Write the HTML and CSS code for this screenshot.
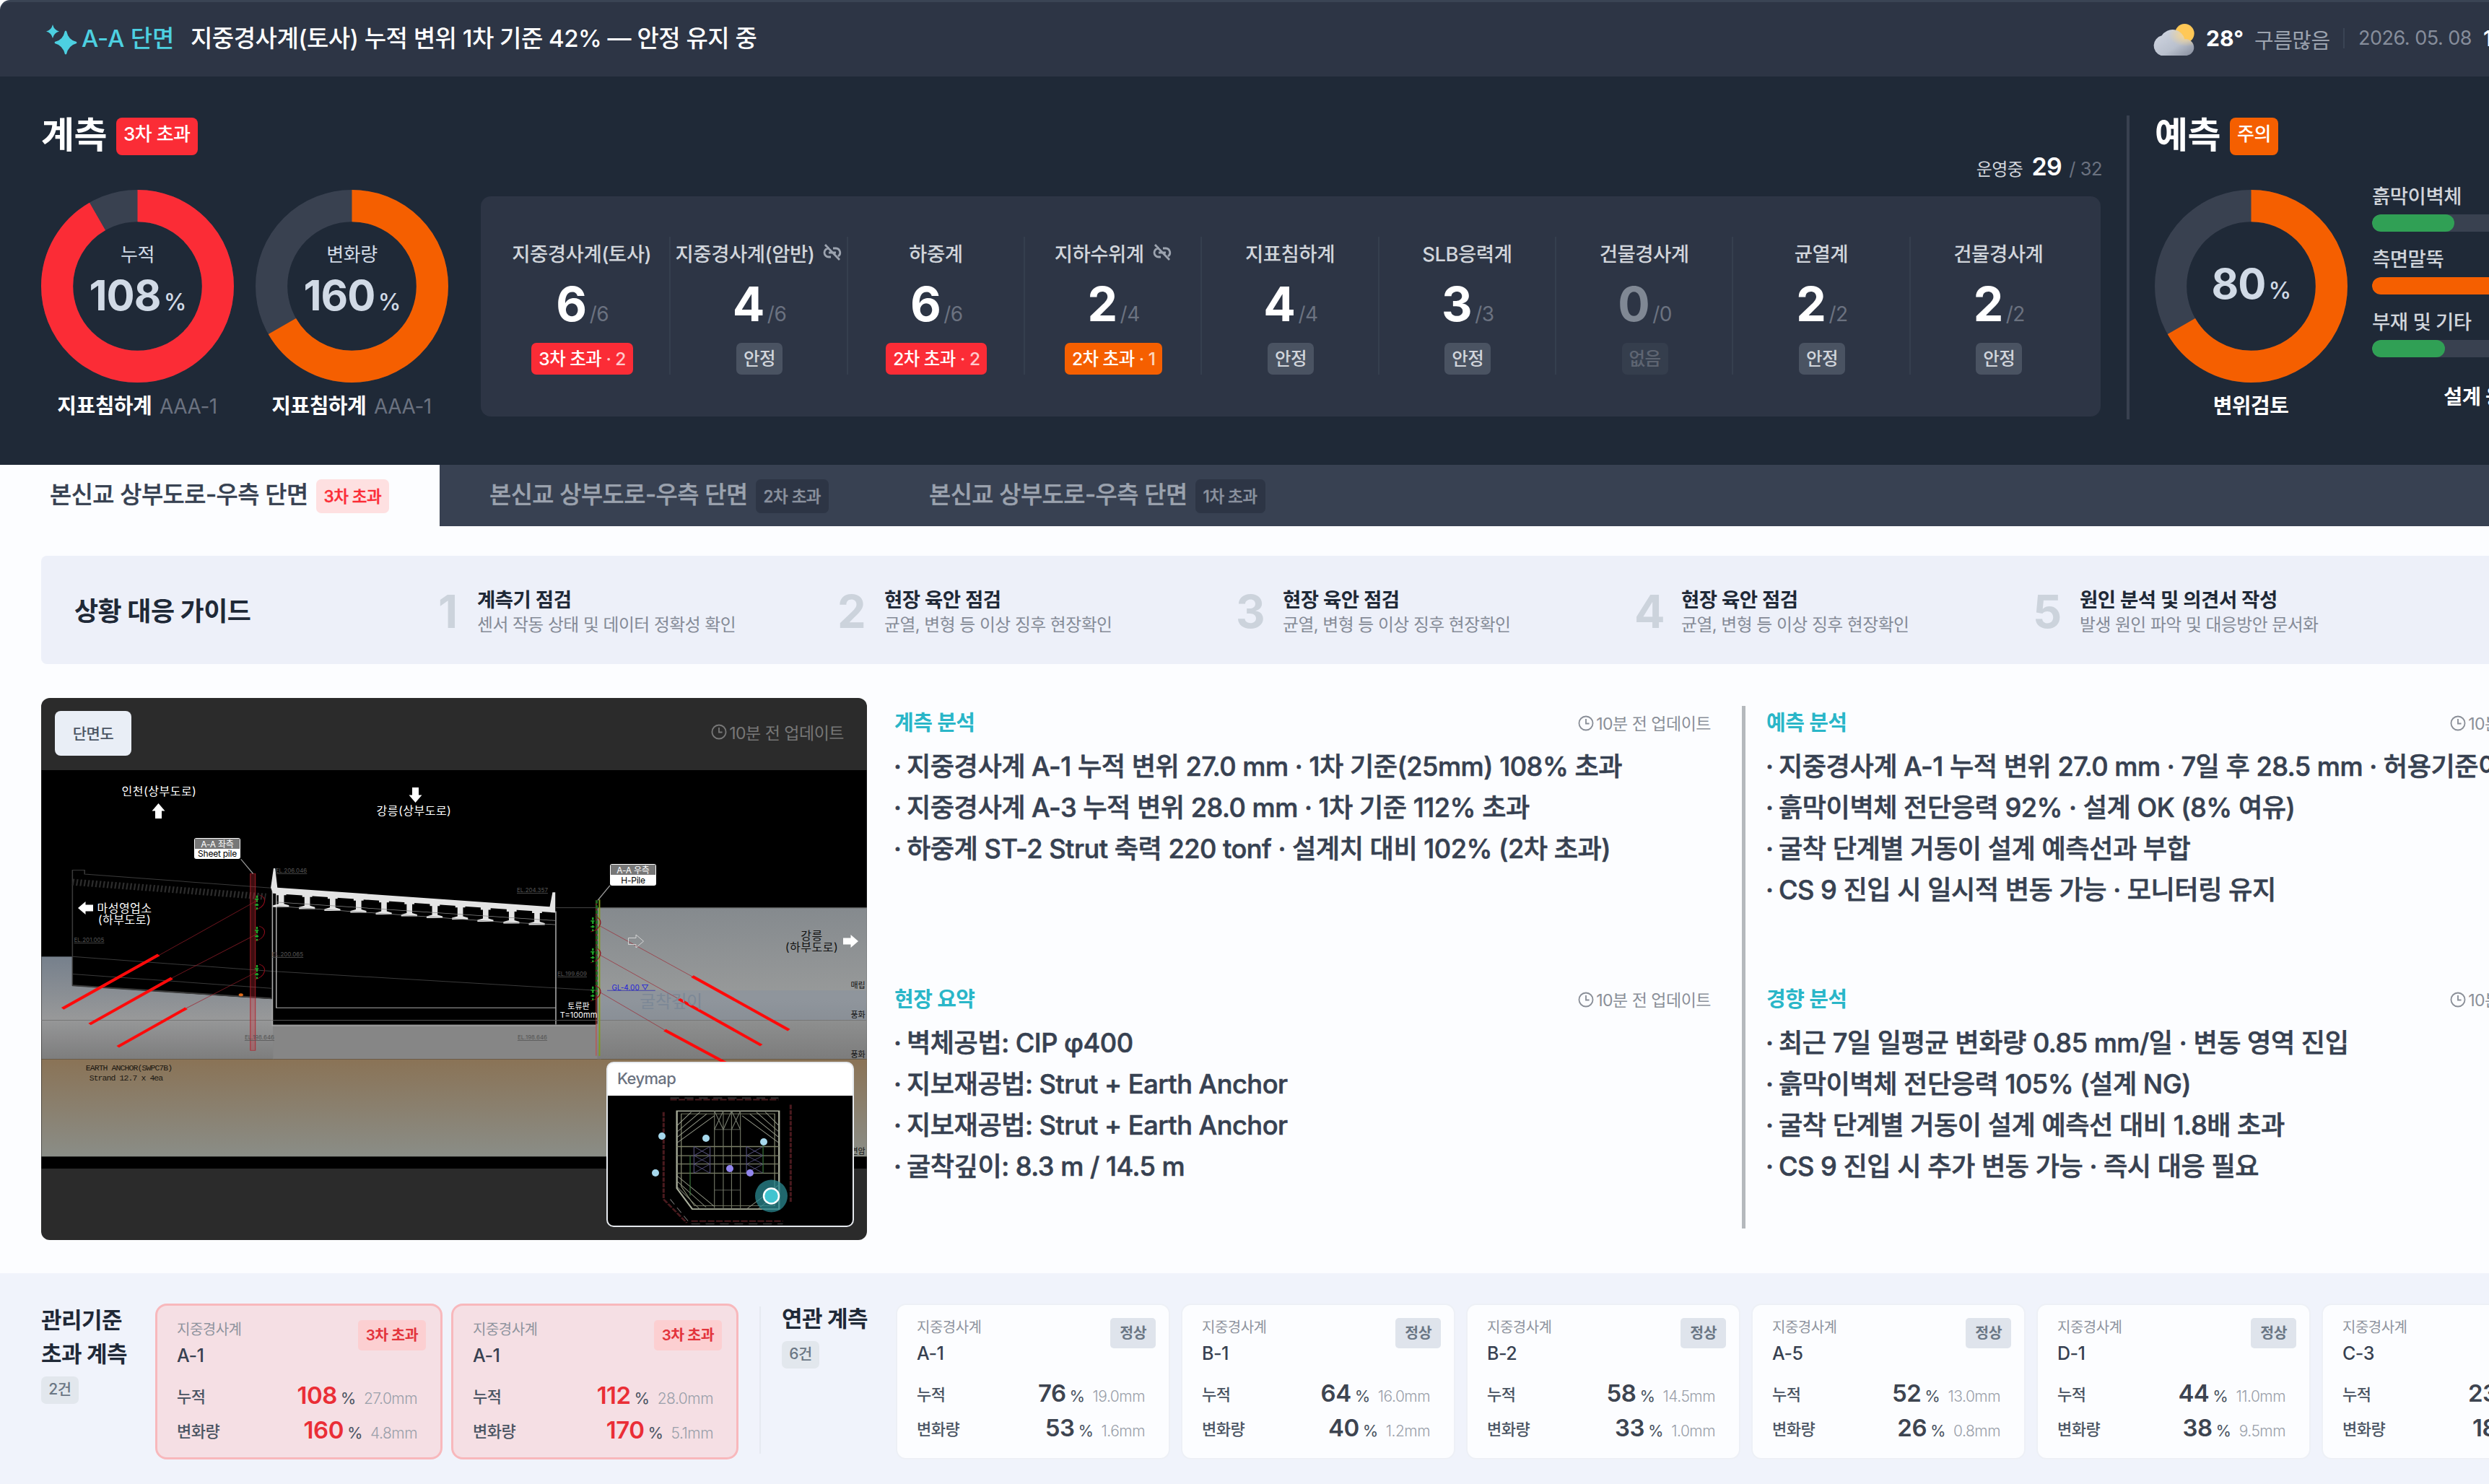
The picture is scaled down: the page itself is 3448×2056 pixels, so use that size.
FILE: index.html
```html
<!DOCTYPE html>
<html lang="ko">
<head>
    <meta charset="UTF-8">
    <meta name="viewport" content="width=device-width, initial-scale=1.0">
    <title>계측 대시보드</title>
    <link rel="stylesheet" href="styles.css">
</head>
<body>
    <!-- shared icons -->
    <svg class="defs" width="0" height="0">
        <symbol id="clock" viewBox="0 0 24 24">
            <circle cx="12" cy="12" r="10.4" fill="none" stroke="currentColor" stroke-width="2"/>
            <path d="M12 5.5V12.5H17" fill="none" stroke="currentColor" stroke-width="2"/>
        </symbol>
        <symbol id="unlink" viewBox="0 0 26 24">
            <path d="M9 6H8a6 6 0 0 0 0 12h3M14 6h4a6 6 0 0 1 3 11M8 12h10M3 1l20 21" fill="none" stroke="currentColor" stroke-width="2.8"/>
        </symbol>
    </svg>

    <div class="page">
        <header class="topbar">
            <svg class="spark" viewBox="0 0 44 42">
                <path d="M28 9Q31 23 43 25Q31 28 28 41Q25 28 13 25Q25 23 28 9Z" fill="#4dd0e1" stroke="#4dd0e1" stroke-width="2"/>
                <path d="M10 0Q12 8 19 9.500Q12 11 10 19Q8 11 1 9.500Q8 8 10 0Z" fill="#4dd0e1"/>
            </svg>
            <span class="section-name">A-A 단면</span>
            <span class="headline">지중경사계(토사) 누적 변위 1차 기준 42% — 안정 유지 중</span>
            <div class="weather">
                <svg class="weather-icon" viewBox="0 0 60 44">
                    <defs>
                        <linearGradient id="cloud" x1="0" y1="0" x2="1" y2="1">
                            <stop offset="0" stop-color="#d3d8e4"/>
                            <stop offset="0.6" stop-color="#b9c0cd"/>
                            <stop offset="1" stop-color="#858c9c"/>
                        </linearGradient>
                        <radialGradient id="glow" cx="0.82" cy="0.2" r="0.45">
                            <stop offset="0" stop-color="#ffd98a"/>
                            <stop offset="1" stop-color="#ffd98a" stop-opacity="0"/>
                        </radialGradient>
                    </defs>
                    <circle cx="46" cy="13" r="13" fill="#ffc857"/>
                    <path d="M14 43a14 14 0 0 1 1-27a17 17 0 0 1 31 5a11 11 0 0 1 3 22Z" fill="url(#cloud)"/>
                    <path d="M14 43a14 14 0 0 1 1-27a17 17 0 0 1 31 5a11 11 0 0 1 3 22Z" fill="url(#glow)"/>
                </svg>
                <span class="temp">28°</span>
                <span class="sky">구름많음</span>
                <span class="bar"></span>
                <span class="date">2026. 05. 08</span>
                <span class="time">14:32</span>
            </div>
        </header>

        <section class="summary">
            <div class="measure">
                <div class="title-row">
                    <h2>계측</h2>
                    <span class="level red">3차 초과</span>
                </div>
                <div class="donuts">
                    <div class="donut-box">
                        <div class="donut">
                            <svg viewBox="0 0 266 266">
                                <circle class="track" cx="133" cy="133" r="111"/>
                                <circle class="arc red-arc" cx="133" cy="133" r="111" pathLength="100" stroke-dasharray="91.7 100"/>
                            </svg>
                            <div class="donut-text">
                                <span class="donut-label">누적</span>
                                <span class="donut-value">108<small>%</small></span>
                            </div>
                        </div>
                        <div class="caption">지표침하계 <span>AAA-1</span></div>
                    </div>
                    <div class="donut-box">
                        <div class="donut">
                            <svg viewBox="0 0 266 266">
                                <circle class="track" cx="133" cy="133" r="111"/>
                                <circle class="arc orange-arc" cx="133" cy="133" r="111" pathLength="100" stroke-dasharray="66.7 100"/>
                            </svg>
                            <div class="donut-text">
                                <span class="donut-label">변화량</span>
                                <span class="donut-value">160<small>%</small></span>
                            </div>
                        </div>
                        <div class="caption">지표침하계 <span>AAA-1</span></div>
                    </div>
                </div>
            </div>

            <div class="sensors">
                <div class="running">운영중 <b>29</b> <span>/ 32</span></div>
                <div class="panel">
                    <div class="cell">
                        <div class="name">지중경사계(토사)</div>
                        <div class="num">6<small>/6</small></div>
                        <span class="chip red">3차 초과<i> · 2</i></span>
                    </div>
                    <div class="cell">
                        <div class="name">지중경사계(암반)<svg class="unlink"><use href="#unlink"/></svg></div>
                        <div class="num">4<small>/6</small></div>
                        <span class="chip">안정</span>
                    </div>
                    <div class="cell">
                        <div class="name">하중계</div>
                        <div class="num">6<small>/6</small></div>
                        <span class="chip red">2차 초과<i> · 2</i></span>
                    </div>
                    <div class="cell">
                        <div class="name">지하수위계<svg class="unlink"><use href="#unlink"/></svg></div>
                        <div class="num">2<small>/4</small></div>
                        <span class="chip orange">2차 초과<i> · 1</i></span>
                    </div>
                    <div class="cell">
                        <div class="name">지표침하계</div>
                        <div class="num">4<small>/4</small></div>
                        <span class="chip">안정</span>
                    </div>
                    <div class="cell">
                        <div class="name">SLB응력계</div>
                        <div class="num">3<small>/3</small></div>
                        <span class="chip">안정</span>
                    </div>
                    <div class="cell empty">
                        <div class="name">건물경사계</div>
                        <div class="num">0<small>/0</small></div>
                        <span class="chip">없음</span>
                    </div>
                    <div class="cell">
                        <div class="name">균열계</div>
                        <div class="num">2<small>/2</small></div>
                        <span class="chip">안정</span>
                    </div>
                    <div class="cell">
                        <div class="name">건물경사계</div>
                        <div class="num">2<small>/2</small></div>
                        <span class="chip">안정</span>
                    </div>
                </div>
            </div>

            <div class="split"></div>

            <div class="predict">
                <div class="title-row">
                    <h2>예측</h2>
                    <span class="level orange">주의</span>
                </div>
                <div class="donuts">
                    <div class="donut-box">
                        <div class="donut">
                            <svg viewBox="0 0 266 266">
                                <circle class="track" cx="133" cy="133" r="111"/>
                                <circle class="arc orange-arc" cx="133" cy="133" r="111" pathLength="100" stroke-dasharray="66.7 100"/>
                            </svg>
                            <div class="donut-text">
                                <span class="donut-value">80<small>%</small></span>
                            </div>
                        </div>
                        <div class="caption">변위검토</div>
                    </div>
                    <div class="bars">
                        <div class="bar-name">흙막이벽체</div>
                        <div class="meter"><div class="fill green" style="width: 114px"></div></div>
                        <div class="bar-name">측면말뚝</div>
                        <div class="meter"><div class="fill orange" style="width: 300px"></div></div>
                        <div class="bar-name">부재 및 기타</div>
                        <div class="meter"><div class="fill green" style="width: 101px"></div></div>
                        <div class="bars-caption">설계 응력</div>
                    </div>
                </div>
            </div>
        </section>

        <nav class="tabs">
            <a class="tab active">본신교 상부도로-우측 단면 <span>3차 초과</span></a>
            <a class="tab">본신교 상부도로-우측 단면 <span>2차 초과</span></a>
            <a class="tab">본신교 상부도로-우측 단면 <span>1차 초과</span></a>
        </nav>

        <section class="guide">
            <h3>상황 대응 가이드</h3>
            <div class="step first"><b>1</b><div><strong>계측기 점검</strong><p>센서 작동 상태 및 데이터 정확성 확인</p></div></div>
            <div class="step"><b>2</b><div><strong>현장 육안 점검</strong><p>균열, 변형 등 이상 징후 현장확인</p></div></div>
            <div class="step"><b>3</b><div><strong>현장 육안 점검</strong><p>균열, 변형 등 이상 징후 현장확인</p></div></div>
            <div class="step"><b>4</b><div><strong>현장 육안 점검</strong><p>균열, 변형 등 이상 징후 현장확인</p></div></div>
            <div class="step"><b>5</b><div><strong>원인 분석 및 의견서 작성</strong><p>발생 원인 파악 및 대응방안 문서화</p></div></div>
        </section>

        <section class="detail">
            <div class="drawing">
                <div class="drawing-head">
                    <button class="view-btn">단면도</button>
                    <span class="updated"><svg><use href="#clock"/></svg>10분 전 업데이트</span>
                </div>
                <svg class="section-view" viewBox="0 0 1143 552">
                    <defs>
                        <linearGradient id="soil" x1="0" y1="0" x2="0" y2="1">
                            <stop offset="0" stop-color="#858a8e"/>
                            <stop offset="0.6" stop-color="#989a9a"/>
                            <stop offset="1" stop-color="#7c7c7c"/>
                        </linearGradient>
                        <linearGradient id="soil-left" x1="0" y1="0" x2="0" y2="1">
                            <stop offset="0" stop-color="#76808c"/>
                            <stop offset="0.6" stop-color="#979899"/>
                            <stop offset="1" stop-color="#7d7d7d"/>
                        </linearGradient>
                        <linearGradient id="rock" x1="0" y1="0" x2="0" y2="1">
                            <stop offset="0" stop-color="#8a7356"/>
                            <stop offset="1" stop-color="#8a8d87"/>
                        </linearGradient>
                        <path id="arrow" d="M0 -14L9 0H4.500V14H-4.500V0H-9Z"/>
                        <path id="girder" d="M-9 -14H9V-4H5V20L14 24V29H-15V24L-5 20V-4H-9Z"/>
                        <g id="strut">
                            <path d="M8 -20C24 -14 20 14 0 22" fill="none" stroke="#8c0c1a" stroke-width="1.500"/>
                            <path d="M4 -18V20M0 -8H8M0 8H8" stroke="#22a82a" stroke-width="3" stroke-dasharray="7 4"/>
                        </g>
                    </defs>
                    <rect width="1143" height="552" fill="#000"/>
                    <g transform="scale(.7653 .5036) translate(-24 -232)">
                        <!-- ground layers -->
                        <rect x="24" y="745" width="420" height="282" fill="url(#soil-left)"/>
                        <rect x="443" y="930" width="594" height="97" fill="#868686"/>
                        <rect x="1030" y="610" width="488" height="417" fill="url(#soil)"/>
                        <rect x="1037" y="838" width="480" height="82" fill="#8590a0" opacity=".45"/>
                        <path d="M24 920H1517" stroke="#777" stroke-width="2"/>
                        <path d="M955 611H1517" stroke="#555" stroke-width="2"/>
                        <rect x="24" y="1027" width="1494" height="268" fill="url(#rock)"/>
                        <path d="M80 744V825L443 862V744Z" fill="#000"/>
                        <rect x="443" y="612" width="585" height="320" fill="#000"/>
                        <!-- existing road on the left -->
                        <g fill="none" stroke="#3a3a3a" stroke-width="2">
                            <path d="M80 825V507H102V518L440 556"/>
                            <path d="M80 540L430 580" stroke="#2c2c2c" stroke-width="18" stroke-dasharray="3 4"/>
                            <path d="M80 745L440 785L1030 838M80 793L440 832"/>
                            <path d="M80 824L440 860" stroke-width="4"/>
                        </g>
                        <!-- structure box -->
                        <g fill="none" stroke="#aaa" stroke-width="2">
                            <path d="M442 555V935H1028M449 565V886H955M955 620V932M442 568V935"/>
                            <path d="M442 920H1028" stroke="#555"/>
                        </g>
                        <!-- bridge deck -->
                        <g fill="#e4e4e4">
                            <path d="M439 555L444 502H447L451 555L944 608L949 568H954V624L443 571Z"/>
                            <use href="#girder" x="458" y="580"/>
                            <use href="#girder" x="505" y="585"/>
                            <use href="#girder" x="551" y="590"/>
                            <use href="#girder" x="598" y="595"/>
                            <use href="#girder" x="644" y="600"/>
                            <use href="#girder" x="690" y="605"/>
                            <use href="#girder" x="736" y="610"/>
                            <use href="#girder" x="782" y="614"/>
                            <use href="#girder" x="828" y="620"/>
                            <use href="#girder" x="875" y="625"/>
                            <use href="#girder" x="921" y="629"/>
                        </g>
                        <path d="M450 595L955 646M450 606L860 650L955 657" stroke="#888" stroke-width="1.500" fill="none"/>
                        <!-- piles -->
                        <rect x="402" y="517" width="9" height="486" fill="#d02a35" fill-opacity=".3" stroke="#b0202c" stroke-opacity=".8" stroke-width="1.500"/>
                        <path d="M1028 590V1018" stroke="#c44" stroke-opacity=".7" stroke-width="2"/>
                        <path d="M1034 588V1018" stroke="#7f9a1c" stroke-width="2.500"/>
                        <path d="M1029 590V850" stroke="#1d6a1f" stroke-width="4" stroke-dasharray="9 5"/>
                        <path d="M385 477L407 517M1053 549L1031 590" stroke="#999" stroke-width="2"/>
                        <use href="#strut" x="410" y="595"/>
                        <use href="#strut" x="410" y="681"/>
                        <use href="#strut" x="410" y="786"/>
                        <use href="#strut" x="1018" y="655"/>
                        <use href="#strut" x="1018" y="740"/>
                        <use href="#strut" x="1018" y="845"/>
                        <!-- anchors -->
                        <path d="M415 590L236 742M415 682L260 804M415 786L286 887M1034 660L1202 800M1034 740L1178 862M1034 842L1152 947" stroke="#a0202c" stroke-opacity=".7" stroke-width="1.500"/>
                        <path d="M236 740L62 888M260 804L111 931M286 887L162 993M1202 799L1377 947M1178 862L1327 989M1152 947L1262 1037" stroke="#ff0a0a" stroke-width="7"/>
                        <circle cx="385" cy="850" r="4" fill="#e06a1a"/>
                        <path d="M1048 838H1135" stroke="#44a" stroke-width="2"/>
                    </g>
                    <!-- direction arrows -->
                    <g fill="#fff">
                        <use href="#arrow" transform="translate(162 56.500) scale(1 .75)"/>
                        <use href="#arrow" transform="translate(518 34.500) rotate(180) scale(1 .75)"/>
                        <use href="#arrow" transform="translate(61 191) rotate(-90) scale(1 .75)"/>
                        <use href="#arrow" transform="translate(1121 237) rotate(90) scale(1 .75)"/>
                    </g>
                    <use href="#arrow" transform="translate(823.500 237) rotate(90) scale(1 .75)" fill="none" stroke="#ddd"/>
                    <g class="cad-text">
                        <text x="163" y="35">인천(상부도로)</text>
                        <text x="516" y="62">강릉(상부도로)</text>
                        <text x="115" y="197">마성영업소</text>
                        <text x="115" y="213">(하부도로)</text>
                        <text x="744" y="331" class="tiny">토류판</text>
                        <text x="744" y="343" class="tiny">T=100mm</text>
                    </g>
                    <g class="cad-text dark">
                        <text x="1067" y="235">강릉</text>
                        <text x="1067" y="251">(하부도로)</text>
                    </g>
                    <g class="cad-text faint">
                        <text x="346" y="142">EL.206.046</text>
                        <text x="680" y="169">EL.204.357</text>
                        <text x="66" y="238">EL.201.005</text>
                        <text x="341" y="258">EL.200.065</text>
                        <text x="735" y="285">EL.199.609</text>
                        <text x="302" y="373">EL.198.646</text>
                        <text x="680" y="373">EL.198.646</text>
                    </g>
                    <text x="790" y="305" class="gl">GL-4.00 ▽</text>
                    <text x="872" y="329" class="ghost">굴착깊이</text>
                    <g class="cad-text layer">
                        <text x="1131" y="302">매립</text>
                        <text x="1131" y="343">풍화</text>
                        <text x="1131" y="398">풍화</text>
                        <text x="1131" y="532">연암</text>
                    </g>
                    <g class="cad-label">
                        <rect x="211.500" y="94" width="64" height="29" rx="3" fill="#fff"/>
                        <rect x="212.500" y="95" width="62" height="14" fill="#777"/>
                        <text x="243.500" y="106.500" fill="#fff">A-A 좌측</text>
                        <text x="243.500" y="120">Sheet pile</text>
                        <rect x="787.500" y="130" width="64" height="30" rx="3" fill="#fff"/>
                        <rect x="788.500" y="131" width="62" height="14" fill="#777"/>
                        <text x="819.500" y="142.500" fill="#fff">A-A 우측</text>
                        <text x="819.500" y="156.500">H-Pile</text>
                    </g>
                    <g class="cad-note">
                        <text x="121" y="416">EARTH ANCHOR(SWPC7B)</text>
                        <text x="117" y="430">Strand 12.7 x 4ea</text>
                    </g>
                </svg>
                <div class="keymap">
                    <div class="keymap-head">Keymap</div>
                    <svg viewBox="0 0 339 180">
                        <rect width="339" height="180" fill="#000"/>
                        <g transform="scale(.7653 .5036) translate(-1047 -1125)" fill="none" stroke="#8f9479" stroke-width="1.500">
                            <path d="M1172 1167H1357V1437H1200L1172 1380Z" stroke="#a9ae9b" stroke-width="3"/>
                            <path d="M1180 1175H1349V1428H1204L1180 1375Z"/>
                            <path d="M1172 1265H1357M1172 1290H1357M1172 1313H1357M1172 1338H1357" stroke="#7c8068" stroke-width="2.500"/>
                            <path d="M1240 1167V1437M1256 1167V1437M1271 1167V1437M1287 1167V1437" stroke="#707563"/>
                            <path d="M1240 1167L1256 1218L1271 1167L1287 1218M1256 1167L1240 1218M1287 1167L1271 1218M1240 1218H1287M1240 1385H1287" stroke="#777d70"/>
                            <path d="M1203 1265L1232 1290L1203 1313L1232 1338M1232 1265L1203 1290L1232 1313L1203 1338M1203 1265V1338M1232 1265V1338" stroke="#54507a"/>
                            <path d="M1298 1265L1328 1290L1298 1313L1328 1338M1328 1265L1298 1290L1328 1313L1298 1338M1298 1265V1338" stroke="#54507a"/>
                            <path d="M1172 1255L1240 1180M1172 1240L1226 1175M1172 1225L1214 1170M1172 1208L1198 1170M1357 1255L1290 1180M1357 1240L1304 1175M1357 1225L1316 1170M1357 1208L1332 1170" stroke="#9a9e8e"/>
                            <path d="M1172 1345L1240 1430M1172 1360L1225 1432M1172 1375L1212 1435M1357 1370L1300 1435M1357 1390L1320 1435" stroke="#8f9382"/>
                            <path d="M1160 1136H1356M1148 1170V1410L1190 1475M1378 1150V1420M1198 1470H1364" stroke="#4a1a1e" stroke-width="4" stroke-dasharray="12 3"/>
                            <path d="M1160 1131H1356M1198 1478H1364M1160 1410L1195 1475" stroke="#777" stroke-dasharray="16 10"/>
                            <path d="M1328 1253V1338M1196 1290V1400" stroke="#3d7a3d"/>
                        </g>
                        <g fill="#a6d8ec">
                            <circle cx="75" cy="56" r="5"/>
                            <circle cx="136" cy="59" r="5"/>
                            <circle cx="216" cy="64" r="5"/>
                            <circle cx="66" cy="107" r="5"/>
                        </g>
                        <circle cx="169" cy="101" r="5" fill="#9286ee"/>
                        <circle cx="197" cy="107" r="5" fill="#9286ee"/>
                        <circle cx="226.500" cy="139" r="22.500" fill="#2b8a92" fill-opacity=".75"/>
                        <circle cx="226.500" cy="139" r="10.500" fill="#41c4d0" stroke="#fff" stroke-width="2.500"/>
                    </svg>
                </div>
            </div>

            <div class="notes">
                <article>
                    <div class="note-head"><h4>계측 분석</h4><span class="updated"><svg><use href="#clock"/></svg>10분 전 업데이트</span></div>
                    <ul>
                        <li>지중경사계 A-1 누적 변위 27.0 mm · 1차 기준(25mm) 108% 초과</li>
                        <li>지중경사계 A-3 누적 변위 28.0 mm · 1차 기준 112% 초과</li>
                        <li>하중계 ST-2 Strut 축력 220 tonf · 설계치 대비 102% (2차 초과)</li>
                    </ul>
                </article>
                <article>
                    <div class="note-head"><h4>현장 요약</h4><span class="updated"><svg><use href="#clock"/></svg>10분 전 업데이트</span></div>
                    <ul>
                        <li>벽체공법: CIP φ400</li>
                        <li>지보재공법: Strut + Earth Anchor</li>
                        <li>지보재공법: Strut + Earth Anchor</li>
                        <li>굴착깊이: 8.3 m / 14.5 m</li>
                    </ul>
                </article>
            </div>

            <div class="notes-line"></div>

            <div class="notes">
                <article>
                    <div class="note-head"><h4>예측 분석</h4><span class="updated"><svg><use href="#clock"/></svg>10분 전 업데이트</span></div>
                    <ul>
                        <li>지중경사계 A-1 누적 변위 27.0 mm · 7일 후 28.5 mm · 허용기준이내</li>
                        <li>흙막이벽체 전단응력 92% · 설계 OK (8% 여유)</li>
                        <li>굴착 단계별 거동이 설계 예측선과 부합</li>
                        <li>CS 9 진입 시 일시적 변동 가능 · 모니터링 유지</li>
                    </ul>
                </article>
                <article>
                    <div class="note-head"><h4>경향 분석</h4><span class="updated"><svg><use href="#clock"/></svg>10분 전 업데이트</span></div>
                    <ul>
                        <li>최근 7일 일평균 변화량 0.85 mm/일 · 변동 영역 진입</li>
                        <li>흙막이벽체 전단응력 105% (설계 NG)</li>
                        <li>굴착 단계별 거동이 설계 예측선 대비 1.8배 초과</li>
                        <li>CS 9 진입 시 추가 변동 가능 · 즉시 대응 필요</li>
                    </ul>
                </article>
            </div>
        </section>

        <footer class="related">
            <div class="group-title over">관리기준<br>초과 계측<span>2건</span></div>
            <div class="cards alert">
                <div class="card">
                    <div class="card-head"><div><em>지중경사계</em><strong>A-1</strong></div><span class="state">3차 초과</span></div>
                    <div class="row">누적<span><b>108</b><u>%</u><i>27.0mm</i></span></div>
                    <div class="row">변화량<span><b>160</b><u>%</u><i>4.8mm</i></span></div>
                </div>
                <div class="card">
                    <div class="card-head"><div><em>지중경사계</em><strong>A-1</strong></div><span class="state">3차 초과</span></div>
                    <div class="row">누적<span><b>112</b><u>%</u><i>28.0mm</i></span></div>
                    <div class="row">변화량<span><b>170</b><u>%</u><i>5.1mm</i></span></div>
                </div>
            </div>
            <div class="related-line"></div>
            <div class="group-title">연관 계측<span>6건</span></div>
            <div class="cards">
                <div class="card">
                    <div class="card-head"><div><em>지중경사계</em><strong>A-1</strong></div><span class="state">정상</span></div>
                    <div class="row">누적<span><b>76</b><u>%</u><i>19.0mm</i></span></div>
                    <div class="row">변화량<span><b>53</b><u>%</u><i>1.6mm</i></span></div>
                </div>
                <div class="card">
                    <div class="card-head"><div><em>지중경사계</em><strong>B-1</strong></div><span class="state">정상</span></div>
                    <div class="row">누적<span><b>64</b><u>%</u><i>16.0mm</i></span></div>
                    <div class="row">변화량<span><b>40</b><u>%</u><i>1.2mm</i></span></div>
                </div>
                <div class="card">
                    <div class="card-head"><div><em>지중경사계</em><strong>B-2</strong></div><span class="state">정상</span></div>
                    <div class="row">누적<span><b>58</b><u>%</u><i>14.5mm</i></span></div>
                    <div class="row">변화량<span><b>33</b><u>%</u><i>1.0mm</i></span></div>
                </div>
                <div class="card">
                    <div class="card-head"><div><em>지중경사계</em><strong>A-5</strong></div><span class="state">정상</span></div>
                    <div class="row">누적<span><b>52</b><u>%</u><i>13.0mm</i></span></div>
                    <div class="row">변화량<span><b>26</b><u>%</u><i>0.8mm</i></span></div>
                </div>
                <div class="card">
                    <div class="card-head"><div><em>지중경사계</em><strong>D-1</strong></div><span class="state">정상</span></div>
                    <div class="row">누적<span><b>44</b><u>%</u><i>11.0mm</i></span></div>
                    <div class="row">변화량<span><b>38</b><u>%</u><i>9.5mm</i></span></div>
                </div>
                <div class="card">
                    <div class="card-head"><div><em>지중경사계</em><strong>C-3</strong></div><span class="state">정상</span></div>
                    <div class="row">누적<span><b>23</b><u>%</u><i>5.8mm</i></span></div>
                    <div class="row">변화량<span><b>18</b><u>%</u><i>0.5mm</i></span></div>
                </div>
            </div>
        </footer>
    </div>
</body>
</html>
```

FILE: styles.css
```css
* {
    box-sizing: border-box;
}
body {
    margin: 0;
    width: 3448px;
    height: 2056px;
    overflow: hidden;
    font-family: Inter, "Noto Sans CJK KR", sans-serif;
    letter-spacing: -0.5px;
    white-space: nowrap;
    background: #fcfdff;
    color: #1f2937;
}
h2, h3, h4, p, ul {
    margin: 0;
    padding: 0;
}
i, em, u {
    font-style: normal;
    text-decoration: none;
}
.defs {
    display: block;
}
.page {
    width: 3448px;
    height: 2056px;
    overflow: hidden;
    display: flex;
    flex-direction: column;
}
.red {
    background: #fb2c36;
    color: #fff;
}
.orange {
    background: #f55f00;
    color: #fff;
}
.green {
    background: #30a055;
}

/* top bar */
.topbar {
    height: 106px;
    display: flex;
    align-items: center;
    padding: 0 0 3px 63px;
    background: #2d3545;
    border-top: 3px solid #3a4454;
    border-top-left-radius: 14px;
    font-size: 33px;
    line-height: 40px;
}
.topbar > *, .weather > * {
    flex-shrink: 0;
}
.spark {
    width: 44px;
    height: 42px;
    margin-top: 4px;
}
.section-name {
    margin-left: 6px;
    width: 151px;
    color: #4dd0e1;
    font-weight: 500;
    letter-spacing: -0.2px;
}
.headline {
    color: #fff;
    font-weight: 500;
    width: 2715px;
}
.weather {
    display: flex;
    align-items: center;
    color: #9ca3af;
}
.weather-icon {
    width: 62px;
    height: 45px;
    margin: 4px 15px 0 0;
}
.temp {
    width: 67px;
    font-size: 30px;
    font-weight: 700;
    letter-spacing: 0;
    color: #fff;
}
.sky {
    width: 123px;
    font-size: 29px;
    padding-top: 7px;
}
.bar {
    width: 2px;
    height: 28px;
    background: #3a4454;
    margin-right: 19px;
}
.date {
    width: 173px;
    font-size: 27px;
    color: #868d9b;
}
.time {
    font-size: 30px;
    font-weight: 600;
    color: #fff;
}

/* summary */
.summary {
    height: 538px;
    display: flex;
    padding: 57px 0 0 57px;
    background: #1f2937;
    color: #fff;
}
.summary > * {
    flex-shrink: 0;
}
.title-row {
    display: flex;
    align-items: center;
    gap: 13px;
    height: 52px;
}
.title-row h2 {
    font-size: 50px;
    line-height: 52px;
    font-weight: 700;
    padding-bottom: 4px;
}
.level {
    height: 52px;
    padding: 0 10px;
    border-radius: 8px;
    font-size: 26px;
    line-height: 46px;
    font-weight: 500;
}
.donuts {
    display: flex;
    gap: 31px;
    margin-top: 47px;
}
.donut {
    width: 266px;
    height: 268px;
    display: grid;
    place-items: center;
}
.donut > * {
    grid-area: 1 / 1;
}
.donut svg {
    width: 267px;
    height: 267px;
    transform: rotate(-90deg);
}
.track, .arc {
    fill: none;
    stroke: #394150;
    stroke-width: 44;
}
.red-arc {
    stroke: #fb2c36;
}
.orange-arc {
    stroke: #f55f00;
}
.donut-text {
    display: flex;
    flex-direction: column;
    align-items: center;
    color: #d1dae6;
}
.donut-label {
    font-size: 26px;
    line-height: 32px;
    margin: -1px 0 5px;
}
.donut-value {
    font-size: 58px;
    line-height: 70px;
    font-weight: 700;
    letter-spacing: -0.015em;
}
.donut-value:first-child {
    margin-top: 3px;
}
.donut-value small {
    font-size: 32px;
    font-weight: 500;
    margin-left: 4px;
}
.caption {
    margin-top: 15px;
    text-align: center;
    font-size: 29px;
    line-height: 36px;
    font-weight: 600;
}
.caption span {
    color: #6b7280;
    font-size: 28px;
    font-weight: 400;
    margin-left: 4px;
}
.sensors {
    margin: 50px 0 0 46px;
    width: 2244px;
}
.running {
    display: flex;
    justify-content: flex-end;
    align-items: baseline;
    gap: 12px;
    height: 59px;
    margin-right: -2px;
    font-size: 24px;
    line-height: 36px;
    color: #d1d5db;
}
.running b {
    font-size: 34px;
    font-weight: 600;
    color: #fff;
}
.running span {
    font-size: 25.500px;
    color: #6b7280;
    margin-left: -2px;
}
.panel {
    display: flex;
    height: 305px;
    padding: 56px 18px 58px;
    border-radius: 14px;
    background: #2d3545;
}
.cell {
    flex: 1;
    min-width: 0;
    display: flex;
    flex-direction: column;
    align-items: center;
    border-right: 2px solid #353f4e;
}
.cell:last-child {
    border-right-color: transparent;
}
.name {
    display: flex;
    align-items: center;
    gap: 12px;
    height: 46px;
    font-size: 27.500px;
    font-weight: 500;
    color: #d1d5db;
}
.unlink {
    width: 26px;
    height: 24px;
    color: #9ca3af;
}
.num {
    height: 103px;
    line-height: 99px;
    font-size: 66px;
    font-weight: 700;
    padding-left: 2px;
}
.num small {
    font-size: 28px;
    font-weight: 400;
    color: #6b7280;
    margin-left: 4px;
}
.chip {
    height: 44px;
    margin-left: 2px;
    padding: 0 10px;
    border-radius: 7px;
    font-size: 24.500px;
    line-height: 44px;
    font-weight: 500;
}
.chip:not(.red):not(.orange) {
    background: #4a5362;
    color: #d1d5db;
}
.chip i {
    opacity: .75;
}
.empty .num {
    color: #808894;
}
.empty .chip {
    opacity: .3;
}
.split {
    width: 4px;
    height: 421px;
    margin: -3px 35px 0 36px;
    background: #394150;
}
.bars {
    margin: -4px 0 0 4px;
    width: 400px;
}
.bar-name {
    height: 28px;
    line-height: 28px;
    font-size: 27.500px;
    color: #d1d5db;
    font-weight: 500;
}
.meter {
    height: 24px;
    margin: 11px 0 24px;
    border-radius: 12px;
    background: #394150;
    overflow: hidden;
}
.fill {
    height: 24px;
    border-radius: 12px;
}
.bars-caption {
    margin-top: 37px;
    padding-left: 99px;
    font-size: 28.500px;
    line-height: 36px;
    font-weight: 600;
}

/* tabs */
.tabs {
    display: flex;
    height: 85px;
    background: #384152;
}
.tab {
    width: 609px;
    padding: 0 0 4px 69px;
    display: flex;
    align-items: center;
    gap: 11px;
    font-size: 32.800px;
    font-weight: 500;
    line-height: 80px;
    color: #9ba2ae;
    -webkit-text-stroke: 0.4px currentColor;
}
.tab span {
    height: 47px;
    line-height: 47px;
    margin-top: 5px;
    padding: 0 11px;
    border-radius: 7px;
    font-size: 22.500px;
    background: #2d3545;
    color: #8a919e;
}
.tab.active {
    background: #fcfdff;
    color: #374151;
}
.tab.active span {
    background: #fee0e1;
    color: #fb2c36;
}

/* guide */
.guide {
    display: flex;
    align-items: center;
    height: 150px;
    margin: 41px 0 0 57px;
    padding-left: 46px;
    background: #edf0f9;
    border-radius: 8px 0 0 8px;
}
.guide > * {
    flex-shrink: 0;
}
.guide h3 {
    width: 504px;
    font-size: 36px;
    font-weight: 700;
    padding-bottom: 3px;
}
.step {
    width: 552px;
    display: flex;
    align-items: center;
}
.step.first {
    width: 553px;
}
.step b {
    width: 65px;
    font-size: 63px;
    line-height: 70px;
    font-weight: 700;
    color: #ccd3dc;
    padding-top: 4px;
}
.step.first b {
    width: 54px;
}
.step strong {
    display: block;
    padding-top: 8px;
    font-size: 27.500px;
    line-height: 34px;
    font-weight: 600;
}
.step p {
    font-size: 23.800px;
    line-height: 36px;
    color: #858b97;
}

/* detail */
.detail {
    display: flex;
    margin: 47px 0 0 57px;
    height: 797px;
}
.detail > * {
    flex-shrink: 0;
}
.drawing {
    position: relative;
    width: 1144px;
    height: 751px;
    border-radius: 12px;
    background: #2b2b2b;
    overflow: hidden;
}
.drawing-head {
    height: 100px;
    padding: 18px 32px 0 19px;
    display: flex;
    justify-content: space-between;
}
.view-btn {
    width: 106px;
    height: 62px;
    padding-bottom: 3px;
    border: none;
    border-radius: 8px;
    background: #e9eef6;
    font-family: inherit;
    font-size: 21px;
    letter-spacing: -0.5px;
    font-weight: 500;
    color: #4b5563;
}
.updated {
    display: flex;
    align-items: center;
    gap: 3px;
    font-size: 23px;
    line-height: 30px;
    color: #8a8f98;
}
.updated svg {
    width: 22px;
    height: 22px;
    margin-bottom: 3px;
}
.drawing .updated {
    height: 61px;
    color: #777;
}
.section-view {
    display: block;
    width: 1144px;
    height: 552px;
}
.cad-text {
    fill: #fff;
    font-size: 16px;
    font-weight: 400;
    letter-spacing: 0.03em;
    text-anchor: middle;
}
.cad-text.dark, .cad-text.layer {
    fill: #111;
}
.cad-text.layer, .cad-text .tiny {
    font-size: 11px;
    letter-spacing: 0;
}
.cad-text.faint {
    fill: #555;
    font-size: 8px;
    letter-spacing: 0;
    text-decoration: underline;
}
.gl {
    fill: #2020d8;
    font-size: 10px;
    letter-spacing: 0;
}
.ghost {
    fill: #7c8896;
    font-size: 24px;
    text-anchor: middle;
}
.cad-label {
    font-size: 12px;
    text-anchor: middle;
    letter-spacing: -0.02em;
}
.cad-note {
    fill: #1c1812;
    font-family: "Liberation Mono", monospace;
    font-size: 11.500px;
    text-anchor: middle;
    letter-spacing: -0.08em;
}
.keymap {
    position: absolute;
    right: 18px;
    bottom: 18px;
    width: 343px;
    height: 229px;
    border: 2px solid #e5e9ee;
    border-radius: 10px;
    background: #fff;
    overflow: hidden;
}
.keymap-head {
    height: 45px;
    padding-left: 13px;
    font-size: 22px;
    line-height: 42px;
    font-weight: 500;
    letter-spacing: -0.03em;
    color: #6b7280;
}
.keymap svg {
    display: block;
    width: 339px;
    height: 180px;
}
.notes {
    width: 1131px;
    margin-left: 38px;
}
.notes article {
    height: 383px;
    padding-top: 14px;
}
.note-head {
    display: flex;
    justify-content: space-between;
    height: 53px;
}
.note-head h4 {
    font-size: 29px;
    line-height: 41px;
    font-weight: 600;
    color: #2ab6c8;
}
.note-head .updated {
    height: 44px;
}
.notes ul {
    list-style: none;
}
.notes li {
    font-size: 36.200px;
    line-height: 57px;
    font-weight: 500;
    color: #374151;
    -webkit-text-stroke: 0.6px currentColor;
}
.notes li::before {
    content: "·";
    display: inline-block;
    width: 18px;
    margin-left: -1px;
}
.notes-line {
    width: 5px;
    height: 724px;
    margin-top: 11px;
    margin-left: 43px;
    background: #b5b9bd;
}
.notes-line + .notes {
    margin-left: 29px;
}

/* related sensors */
.related {
    display: flex;
    flex: 1;
    padding: 42px 0 0 57px;
    background: #f0f3fb;
}
.related > *, .card {
    flex-shrink: 0;
}
.group-title {
    width: 158px;
    margin-top: -3px;
    font-size: 31px;
    line-height: 47px;
    font-weight: 700;
}
.group-title.over {
    margin-top: -1px;
}
.group-title span {
    display: block;
    width: 52px;
    height: 38px;
    margin-top: 8px;
    border-radius: 7px;
    background: #e2e7ed;
    color: #6b7785;
    font-size: 21px;
    line-height: 36px;
    font-weight: 500;
    text-align: center;
}
.cards {
    display: flex;
    gap: 15px;
}
.cards.alert {
    gap: 12px;
}
.card {
    width: 380px;
    height: 216px;
    padding: 15px 27px 0 27px;
    background: #fcfdff;
    border: 2px solid #edf0f6;
    border-radius: 14px;
    color: #4b5563;
}
.alert .card {
    width: 398px;
    background: #f5dfe4;
    border: 3px solid #f8b8bc;
    border-radius: 16px;
    padding: 17px 26px 0 27px;
}
.card-head {
    display: flex;
    justify-content: space-between;
    height: 85px;
}
.card-head em {
    display: block;
    font-size: 20px;
    line-height: 32px;
    color: #8f949e;
}
.card-head strong {
    display: block;
    font-size: 25px;
    line-height: 40px;
    font-weight: 500;
    color: #374151;
}
.state {
    height: 42px;
    margin: 3px -9px 0 0;
    padding: 0 13px;
    border-radius: 5px;
    background: #dfe4ec;
    color: #6b7785;
    font-size: 20.500px;
    line-height: 41px;
    font-weight: 600;
}
.alert .state {
    margin: 3px -6px 0 0;
    padding: 0 11px;
    background: #fccfd1;
    color: #e3343c;
}
.row {
    display: flex;
    justify-content: space-between;
    align-items: center;
    height: 48px;
    padding-right: 6px;
    font-size: 22px;
    line-height: 40px;
    font-weight: 500;
}
.row b {
    font-size: 33px;
    font-weight: 600;
    color: #3d4450;
}
.alert .row b {
    color: #ea2e36;
}
.row u {
    font-size: 22px;
    font-weight: 400;
    margin: 0 11px 0 5px;
}
.row i {
    font-size: 21px;
    font-weight: 300;
    color: #9aa0aa;
}
.related-line {
    width: 2px;
    height: 204px;
    margin: 4px 29px 0;
    background: #e6eaf1;
}
```
